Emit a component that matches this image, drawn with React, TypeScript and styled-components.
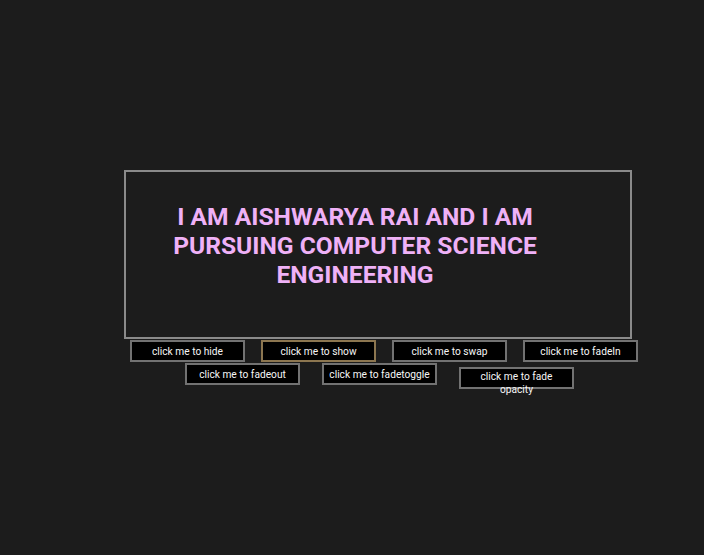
import React from "react";
import styled, { createGlobalStyle } from "styled-components";

const Global = createGlobalStyle`
  html, body { margin: 0; padding: 0; background: #1c1c1c; }
  body { font-family: Roboto, "Liberation Sans", sans-serif; }
`;

const Page = styled.div`
  width: 704px;
  height: 555px;
  box-sizing: border-box;
  padding: 170px 0 0 124px;
  background: #1c1c1c;
`;

const Card = styled.section`
  width: 508px;
  height: 169px;
  box-sizing: border-box;
  border: 2px solid #8a8a8a;
  padding: 30px 0 0 46px;
`;

const Heading = styled.h1`
  margin: 0;
  width: 366px;
  font-family: Roboto, "Liberation Sans", sans-serif;
  font-weight: 700;
  font-size: 24.6px;
  line-height: 29px;
  color: #efb1f7;
  text-align: center;
`;

const Row = styled.div<{ $gap: number; $left: number; $top: number }>`
  display: flex;
  align-items: flex-start;
  gap: ${(p) => p.$gap}px;
  margin-left: ${(p) => p.$left}px;
  margin-top: ${(p) => p.$top}px;
`;

const Btn = styled.button<{ $accent?: boolean; $drop?: number; $top?: boolean }>`
  width: 115px;
  height: 22px;
  box-sizing: border-box;
  flex: none;
  margin-top: ${(p) => p.$drop ?? 0}px;
  padding: 0 2px;
  background: #000;
  color: #f6f6f6;
  border: 2px solid ${(p) => (p.$accent ? "#8c7650" : "#727272")};
  font-family: Roboto, "Liberation Sans", sans-serif;
  font-size: 10.2px;
  line-height: 13px;
  text-align: center;
  display: flex;
  align-items: ${(p) => (p.$top ? "flex-start" : "center")};
  padding-top: ${(p) => (p.$top ? "1px" : "0")};
  justify-content: center;
  overflow: visible;
  cursor: pointer;
`;

export default function App() {
  return (
    <>
      <Global />
      <Page>
        <Card>
          <Heading>I AM AISHWARYA RAI AND I AM PURSUING COMPUTER SCIENCE ENGINEERING</Heading>
        </Card>
        <Row $gap={16} $left={6} $top={1}>
          <Btn>click me to hide</Btn>
          <Btn $accent>click me to show</Btn>
          <Btn>click me to swap</Btn>
          <Btn>click me to fadeIn</Btn>
        </Row>
        <Row $gap={22} $left={61} $top={1}>
          <Btn>click me to fadeout</Btn>
          <Btn>click me to fadetoggle</Btn>
          <Btn $drop={4} $top>click me to fade opacity</Btn>
        </Row>
      </Page>
    </>
  );
}
